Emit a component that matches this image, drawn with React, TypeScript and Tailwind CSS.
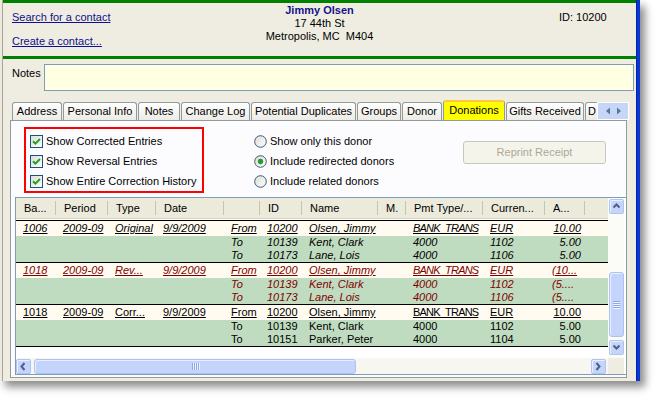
import React from "react";

type Cell = string;

const G1: Cell[][] = [
  ["1006", "2009-09", "Original", "9/9/2009", "From", "10200", "Olsen, Jimmy", "", "BANK_TRANS", "EUR", "10.00"],
  ["", "", "", "", "To", "10139", "Kent, Clark", "", "4000", "1102", "5.00"],
  ["", "", "", "", "To", "10173", "Lane, Lois", "", "4000", "1106", "5.00"],
];
const G2: Cell[][] = [
  ["1018", "2009-09", "Rev...", "9/9/2009", "From", "10200", "Olsen, Jimmy", "", "BANK_TRANS", "EUR", "(10..."],
  ["", "", "", "", "To", "10139", "Kent, Clark", "", "4000", "1102", "(5...."],
  ["", "", "", "", "To", "10173", "Lane, Lois", "", "4000", "1106", "(5...."],
];
const G3: Cell[][] = [
  ["1018", "2009-09", "Corr...", "9/9/2009", "From", "10200", "Olsen, Jimmy", "", "BANK_TRANS", "EUR", "10.00"],
  ["", "", "", "", "To", "10139", "Kent, Clark", "", "4000", "1102", "5.00"],
  ["", "", "", "", "To", "10151", "Parker, Peter", "", "4000", "1104", "5.00"],
];

const HEAD = ["Ba...", "Period", "Type", "Date", "", "ID", "Name", "M.", "Pmt Type/...", "Curren...", "A...", ""];

const GRID = "grid grid-cols-[40px_52px_48px_68px_36px_42px_76px_28px_77px_62px_40px_1fr]";

function DataRow({ cells, cream, italic, color }: { cells: Cell[]; cream: boolean; italic: boolean; color: string }) {
  return (
    <div className={`${GRID} ${cream ? "h-[15px] bg-[#FFFBF0]" : "h-[13px] bg-[#C0DCC0]"} ${italic ? "italic" : ""} ${color}`}>
      {cells.map((c, i) => {
        const amount = i === 10;
        const right = amount && !c.startsWith("(");
        return (
          <div key={i} className={`flex items-center overflow-hidden whitespace-nowrap ${right ? "justify-end pr-[4px]" : "pl-[7px]"}`}>
            <span
              className={`${cream ? "underline decoration-1 underline-offset-[1px]" : ""} ${
                c === "BANK_TRANS" ? "tracking-[-0.8px]" : ""
              }`}
            >
              {c}
            </span>
          </div>
        );
      })}
      <div />
    </div>
  );
}

function Group({ rows, italic, color }: { rows: Cell[][]; italic: boolean; color: string }) {
  return (
    <div className="border-t border-black">
      {rows.map((r, i) => (
        <DataRow key={i} cells={r} cream={i === 0} italic={italic} color={color} />
      ))}
    </div>
  );
}

function Arrow({ dir }: { dir: "up" | "down" | "left" | "right" }) {
  const d =
    dir === "up" ? "M1.5 5.5 L4.5 2.5 L7.5 5.5" : dir === "down" ? "M1.5 2.5 L4.5 5.5 L7.5 2.5" : dir === "left" ? "M5.5 1 L2.5 4.5 L5.5 8" : "M2.5 1 L5.5 4.5 L2.5 8";
  return (
    <svg width="9" height="9" viewBox="0 0 9 9">
      <path d={d} stroke="#4D6185" strokeWidth="2" fill="none" />
    </svg>
  );
}

function SBtn({ dir }: { dir: "up" | "down" | "left" | "right" }) {
  return (
    <div className="w-[15px] h-[15px] rounded-[2px] bg-[#C4D4FB] border border-[#B0C4F1] flex items-center justify-center shadow-[inset_1px_1px_0_#E8EFFE]">
      <Arrow dir={dir} />
    </div>
  );
}

function CheckBox() {
  return (
    <span className="w-[13px] h-[13px] border border-[#1C5180] bg-gradient-to-br from-[#DCDCD7] to-white flex items-center justify-center shrink-0">
      <svg width="9" height="9" viewBox="0 0 9 9">
        <path d="M1 4.2 L3.4 6.6 L8 2" stroke="#21A121" strokeWidth="2" fill="none" />
      </svg>
    </span>
  );
}

function Radio({ on }: { on?: boolean }) {
  return (
    <svg width="13" height="13" viewBox="0 0 13 13" className="shrink-0">
      <defs>
        <linearGradient id="rg" x1="0" y1="0" x2="1" y2="1">
          <stop offset="0" stopColor="#DCDCD7" />
          <stop offset="1" stopColor="#FFFFFF" />
        </linearGradient>
      </defs>
      <circle cx="6.5" cy="6.5" r="5.8" fill="url(#rg)" stroke="#3A5A7C" strokeWidth="1" />
      {on && <circle cx="6.5" cy="6.5" r="2.4" fill="#21A121" stroke="#1F7A1F" strokeWidth="0.6" />}
    </svg>
  );
}

const TABS: [string, number][] = [
  ["Address", 50],
  ["Personal Info", 74],
  ["Notes", 42],
  ["Change Log", 69],
  ["Potential Duplicates", 105],
  ["Groups", 44],
  ["Donor", 40],
  ["Donations", 62],
  ["Gifts Received", 78],
  ["D", 30],
];

export default function App() {
  return (
    <div className="w-[656px] h-[398px] bg-white overflow-hidden font-['Liberation_Sans',Arial,sans-serif] text-[11px] leading-[13px] text-black">
      <div className="w-[640px] h-[381px] flex shadow-[5px_6px_8px_rgba(0,0,0,0.45)]">
        {/* left frame */}
        <div className="w-[3px] bg-[#ECEADF] border-r border-[#A8A597]" />
        {/* content */}
        <div className="w-[633px] flex flex-col bg-[#EFEDE2]">
          <div className="h-[3px] bg-[#008000]" />
          {/* header */}
          <div className="h-[53px] grid grid-cols-[211px_211px_211px]">
            <div className="pl-[9px] pt-[8px] flex flex-col gap-[11px]">
              <span className="underline text-[#10108C]">Search for a contact</span>
              <span className="underline text-[#10108C]">Create a contact...</span>
            </div>
            <div className="pt-px flex flex-col items-center whitespace-nowrap">
              <span className="font-bold text-[#14148A]">Jimmy Olsen</span>
              <span>17 44th St</span>
              <span className="whitespace-pre">Metropolis, MC  M404</span>
            </div>
            <div className="pl-[134px] pt-[8px]">ID: 10200</div>
          </div>
          <div className="h-[3px] bg-[#008000]" />
          {/* notes */}
          <div className="h-[41px] flex items-start pt-[5px] pl-[9px]">
            <span className="w-[32px] mt-[3px]">Notes</span>
            <div className="w-[590px] h-[27px] border border-[#7F9DB9] bg-[#FFFFE1]" />
          </div>
          {/* tabs */}
          <div className="relative h-[20px] w-[626px] overflow-hidden flex items-end gap-px pl-[9px]">
            {TABS.map(([t, w]) => {
              const sel = t === "Donations";
              return (
                <div
                  key={t}
                  style={{ width: w }}
                  className={`shrink-0 flex items-center whitespace-nowrap overflow-hidden rounded-t-[3px] border-x ${
                    sel
                      ? "h-[20px] justify-center bg-[#FFFF00] border-[#919B9C] border-t-[2px] border-t-[#FFC83C] pb-[2px]"
                      : `h-[18px] ${t === "D" ? "justify-start pl-[2px]" : "justify-center"} bg-gradient-to-b from-white to-[#ECEBE5] border-t border-[#919B9C]`
                  }`}
                >
                  {t}
                </div>
              );
            })}
            <div className="absolute left-[594px] top-[2px] w-[32px] h-[18px] bg-[#C6D5F8] border border-white flex items-center justify-center gap-[5px]">
              <svg width="6" height="8" viewBox="0 0 6 8">
                <path d="M5 0.5 L1 4 L5 7.5 Z" fill="#4F7C8E" />
              </svg>
              <svg width="6" height="8" viewBox="0 0 6 8">
                <path d="M1 0.5 L5 4 L1 7.5 Z" fill="#4F7C8E" />
              </svg>
            </div>
          </div>
          {/* panel */}
          <div className="ml-[7px] w-[617px] h-[258px] border border-[#919B9C] bg-[#FCFCFE] flex flex-col">
            <div className="h-[76px] flex items-start pl-[13px] pt-[6px]">
              <div className="w-[180px] h-[66px] border-2 border-[#FF0000] pl-[4px] pt-[2px] flex flex-col">
                {["Show Corrected Entries", "Show Reversal Entries", "Show Entire Correction History"].map((t) => (
                  <div key={t} className="h-[20px] flex items-center gap-[3px] whitespace-nowrap">
                    <CheckBox />
                    <span>{t}</span>
                  </div>
                ))}
              </div>
              <div className="ml-[50px] w-[209px] mt-[4px] flex flex-col">
                {[
                  ["Show only this donor", false],
                  ["Include redirected donors", true],
                  ["Include related donors", false],
                ].map(([t, on]) => (
                  <div key={t as string} className="h-[20px] flex items-center gap-[3px] whitespace-nowrap">
                    <Radio on={on as boolean} />
                    <span>{t as string}</span>
                  </div>
                ))}
              </div>
              <div className="mt-[14px] w-[143px] h-[23px] rounded-[3px] border border-[#C9C7BA] bg-[#F5F4EA] flex items-center justify-center text-[#ACA899]">
                Reprint Receipt
              </div>
            </div>
            {/* grid */}
            <div className="ml-[4px] w-[611px] h-[178px] border-l border-t border-b border-[#7F9DB9] bg-white flex">
              <div className="w-[592px] flex flex-col">
                <div className={`${GRID} h-[21px] bg-[#EBEADB] border-b border-[#D6D2C2]`}>
                  {HEAD.map((h, i) => (
                    <div key={i} className="flex items-center h-full overflow-hidden">
                      <span className="flex-1 pl-[8px] whitespace-nowrap overflow-hidden">{h}</span>
                      {i < 11 && <span className="w-px h-[14px] bg-[#C7C5B2] shrink-0" />}
                    </div>
                  ))}
                </div>
                <div className="h-[139px] pt-px">
                  <Group rows={G1} italic color="text-black" />
                  <Group rows={G2} italic color="text-[#800000]" />
                  <Group rows={G3} italic={false} color="text-black" />
                  <div className="border-t border-black" />
                </div>
                {/* horizontal scrollbar */}
                <div className="h-[16px] bg-[#F7F6F1] flex items-center">
                  <SBtn dir="left" />
                  <div className="ml-[3px] w-[322px] h-[15px] rounded-[3px] bg-[#C4D4FB] border border-[#AEC2F0] flex items-center justify-center gap-px shadow-[inset_1px_1px_0_#E8EFFE]">
                    {[0, 1, 2, 3].map((k) => (
                      <span key={k} className="w-px h-[7px] bg-[#8CA8E8] shadow-[1px_0_0_#EEF4FE]" />
                    ))}
                  </div>
                  <div className="flex-1" />
                  <div className="mr-[2px]">
                    <SBtn dir="right" />
                  </div>
                </div>
              </div>
              {/* vertical scrollbar */}
              <div className="w-[16px] flex flex-col">
                <div className="h-[160px] flex flex-col items-center pt-px bg-[#FBFBF8]">
                  <SBtn dir="up" />
                  <div className="h-[58px]" />
                  <div className="w-[15px] h-[65px] rounded-[3px] bg-[#C4D4FB] border border-[#AEC2F0] flex flex-col items-center justify-center gap-px shadow-[inset_1px_1px_0_#E8EFFE]">
                    {[0, 1, 2, 3].map((k) => (
                      <span key={k} className="w-[7px] h-px bg-[#8CA8E8] shadow-[0_1px_0_#EEF4FE]" />
                    ))}
                  </div>
                  <div className="h-[3px]" />
                  <SBtn dir="down" />
                </div>
                <div className="h-[16px] bg-[#EFEDE2]" />
              </div>
            </div>
          </div>
        </div>
        {/* right frame */}
        <div className="w-[4px] bg-[#0B36D6] border-l border-[#0024A6]" />
      </div>
    </div>
  );
}
